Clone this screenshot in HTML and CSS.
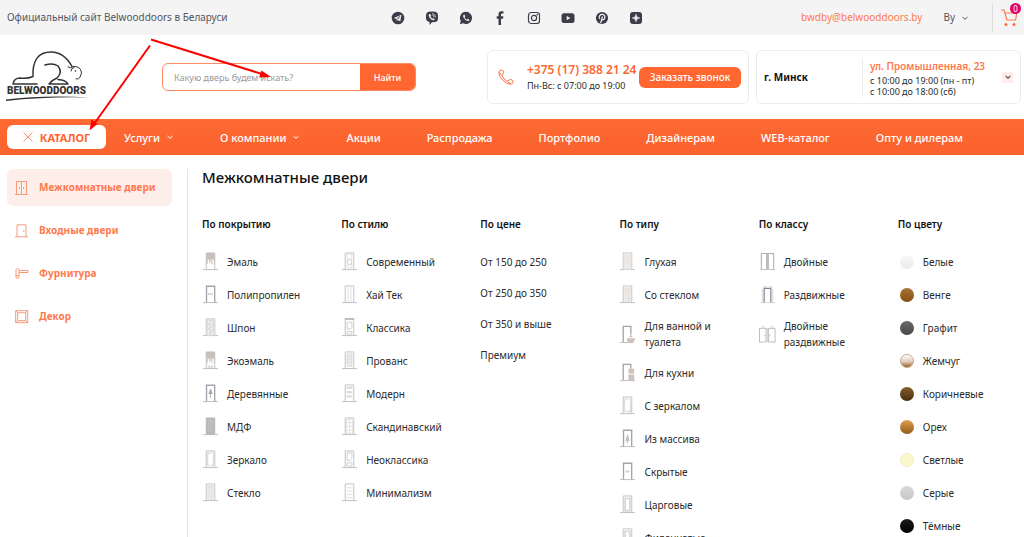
FILE: index.html
```html
<!DOCTYPE html>
<html lang="ru">
<head>
<meta charset="utf-8">
<title>Belwooddoors</title>
<link rel="stylesheet" href="styles.css">
</head>
<body>
<svg class="sprite" aria-hidden="true">
  <symbol id="chev" viewBox="0 0 8 8"><path d="M1.500 3 4 5.300 6.500 3" fill="none" stroke="currentColor"/></symbol>
  <symbol id="frame" viewBox="0 0 16 20"><path d="M0 18.500h16" stroke="#bdbdc2"/><path d="M3.500 18.500V1h9v17.500" fill="none" stroke="#c0c0c6"/></symbol>
  <symbol id="frame-dark" viewBox="0 0 16 20"><path d="M0 18.500h16" stroke="#bdbdc2"/><path d="M3.800 18.500V1.300h8.600v17.200" fill="none" stroke="#a3a3af" stroke-width="1.400"/></symbol>
  <symbol id="d-enamel" viewBox="0 0 16 20"><use href="#frame"/><path d="M3.500 1h9v12h-1V8h-1.500v5H9V8H8v3H6.500V8H5v5H3.500z" fill="#c9bfb9"/></symbol>
  <symbol id="d-poly" viewBox="0 0 16 20"><use href="#frame-dark"/><path d="M5 9.500h6" stroke="#d5ccc7" stroke-width="2" stroke-dasharray="1.500 .5"/></symbol>
  <symbol id="d-veneer" viewBox="0 0 16 20"><use href="#frame"/><path d="M4 1.500h8v17H4z" fill="#e1dfdd"/><path d="M6 3v3m3-2v4M6 8v3m3-1v3m-3 0v4m4-2v2" stroke="#fff" stroke-dasharray="2 1"/></symbol>
  <symbol id="d-eco" viewBox="0 0 16 20"><use href="#d-enamel"/><path d="M5 16.500h6" stroke="#d8d4d0" stroke-width="2"/></symbol>
  <symbol id="d-wood" viewBox="0 0 16 20"><use href="#frame-dark"/><path d="m8 5 1.500 2.500H9l1.300 3H8.400V15h-.8v-4.500H5.700l1.300-3h-.5z" fill="#a9a29d"/></symbol>
  <symbol id="d-massive" viewBox="0 0 16 20"><use href="#frame-dark"/><path d="m8 5 1.200 3.500L10.300 13H8.400v2.500h-.8V13H5.700l1.100-4.500z" fill="#c9bfb8"/></symbol>
  <symbol id="d-mdf" viewBox="0 0 16 20"><use href="#frame"/><path d="M3.500 1h9v17.500h-9z" fill="#b9b6b7"/><path d="M6 3v14M8 3v14M10 3v14" stroke="#d4d1d1" stroke-dasharray="1 1"/></symbol>
  <symbol id="d-mirror" viewBox="0 0 16 20"><use href="#frame"/><path d="M5 3h6v13.500H5z" fill="#fff" stroke="#dcd8d4"/><path d="m5.500 5 1.500-2m2 13.500 2-2" stroke="#d9d4d0"/></symbol>
  <symbol id="d-glass" viewBox="0 0 16 20"><use href="#frame"/><path d="M4.500 2h7v16h-7z" fill="#ebe7e4"/><path d="M6 4h1m2 1h1m-1 9h1" stroke="#cfc8c3"/></symbol>
  <symbol id="d-modern" viewBox="0 0 16 20"><use href="#frame"/><path d="M5.500 2.500h5v5h-5zm0 11h5v3h-5z" fill="none" stroke="#e2dfdc"/><circle cx="8" cy="10.500" r="2.500" fill="#fff" stroke="#d2cecb"/></symbol>
  <symbol id="d-hitech" viewBox="0 0 16 20"><use href="#frame"/><path d="M6.500 2v16m3-16v16" stroke="#e3dcd6"/></symbol>
  <symbol id="d-classic" viewBox="0 0 16 20"><use href="#frame"/><path d="M3 1h10" stroke="#bcbcbc" stroke-width="2"/><path d="M5.500 4.500h5v6l-2 1h-3zM5.500 14h5v3h-5z" fill="#fff" stroke="#cfcdcb"/></symbol>
  <symbol id="d-neo" viewBox="0 0 16 20"><use href="#frame"/><path d="M5.500 3h5v6l-2 2h-3zM5.500 13.500h5v3.500h-5z" fill="#fff" stroke="#cfcdcb"/></symbol>
  <symbol id="d-lines" viewBox="0 0 16 20"><use href="#frame"/><path d="M5.500 3h5v13h-5z" fill="#f0ebe8" stroke="#dfdad7"/><path d="M5 6h6M5 9h6M5 12h6" stroke="#e3dcd7"/></symbol>
  <symbol id="d-blocks" viewBox="0 0 16 20"><use href="#frame"/><path d="M5 4h6m-6 4.500h6M5 13h6" stroke="#e2dcd8" stroke-width="2.500"/></symbol>
  <symbol id="d-grid" viewBox="0 0 16 20"><use href="#frame"/><path d="M5 2.500h6v15H5zM8 2v16M5 6h6m-6 4h6m-6 4h6" fill="none" stroke="#e6e2de"/></symbol>
  <symbol id="d-min" viewBox="0 0 16 20"><use href="#frame"/><path d="M5 5h6M5 8.500h6M5 12h6m-6 3.500h6" stroke="#dddde1"/></symbol>
  <symbol id="d-solid" viewBox="0 0 16 20"><use href="#frame"/><path d="M4 1.500h8v17H4z" fill="#ece8e5"/></symbol>
  <symbol id="d-bath" viewBox="0 0 16 20"><path d="M0 18.500h14" stroke="#bdbdc2"/><path d="M3.500 18V1.500h8V10" fill="none" stroke="#a3a3af" stroke-width="1.400"/><path d="M7 14h9l-1 4H8zM10 13v-2h3v2z" fill="#cdc2bb"/></symbol>
  <symbol id="d-kitchen" viewBox="0 0 16 20"><path d="M0 18.500h16" stroke="#bdbdc2"/><path d="M3.500 18V1.500h8V6" fill="none" stroke="#a3a3af" stroke-width="1.400"/><path d="M9 6h6v5H9zm0 6h6v6H9z" fill="#cdc2bb"/></symbol>
  <symbol id="d-hidden" viewBox="0 0 16 20"><use href="#frame-dark"/><path d="M6 10h4" stroke="#d3cecb" stroke-width="2"/></symbol>
  <symbol id="d-panel" viewBox="0 0 16 20"><use href="#frame"/><path d="M5.500 3.500h5v13h-5z" fill="#fff" stroke="#dcd9d6" stroke-width="2"/></symbol>
  <symbol id="d-double" viewBox="0 0 16 20"><path d="M0 18.500h16" stroke="#bdbdc2"/><path d="M1.500 18V1.500h5.700V18M8.800 18V1.500h5.700V18" fill="none" stroke="#a4a4ab"/><path d="M8 1v17" stroke="#b9b9be"/></symbol>
  <symbol id="d-slide" viewBox="0 0 16 20"><path d="M1 18.500h15M2.500 18V4m11 14V4" stroke="#ddd6d1"/><path d="M4.500 18.500V3.500h7v15" fill="none" stroke="#85859a" stroke-width="1.300"/><path d="M4 2h3m3 0h3" stroke="#c4bfbc"/></symbol>
  <symbol id="d-slide2" viewBox="0 0 18 20"><path d="M.5 18V3.500h7V18zM10 18V3.500h7V18z" fill="none" stroke="#b9b9bd"/><path d="M8.800 3v15" stroke="#c9c9cc"/><path d="M3 2h3m6 0h3M6 10v2m5.500-2v2" stroke="#c9c4c0"/></symbol>
</svg>

<div class="topbar">
  <span class="slogan">Официальный сайт Belwooddoors в Беларуси</span>
  <nav class="social" aria-label="Социальные сети">
    <a href="#" aria-label="Telegram"><svg viewBox="0 0 14 14"><circle cx="7" cy="7" r="6.300"/><path d="m2.800 7 7.700-3.200-1.300 6.700-2.300-1.600-1.200 1.200-.3-2z" fill="#f4f4f4"/><path d="m5.500 8 3.500-2.700-2.600 3.200" fill="none" stroke="#3d3d4a" stroke-width=".6"/></svg></a>
    <a href="#" aria-label="Viber"><svg viewBox="0 0 14 14"><path d="M3.500.8Q7 0 10.500.8 13 1.500 13 4v3.500q0 3-3 3.600l-3 .2L4.500 14v-3Q1 10.500 1 7V4Q1 1.500 3.500.8z"/><path d="M4 3q-1 1 .5 3.500T8.500 9.300q1 0 1.300-1L8.300 7.200l-.8.600Q6 7 5.600 5.500l.7-.7L5 3z" fill="#f4f4f4"/><path d="M7 2.500q3.500.3 3.700 4M7.300 4.200q1.700.2 1.800 2" fill="none" stroke="#f4f4f4" stroke-width=".7"/></svg></a>
    <a href="#" aria-label="WhatsApp"><svg viewBox="0 0 14 14"><path d="M7 .8a6.100 6.100 0 1 1-2.900 11.500L.8 13.300l1-3.200A6.100 6.100 0 0 1 7 .8z"/><path d="M4.700 3.800q-1 .8-.3 2.500 1.500 3 4.300 3.800 1.700 0 1.800-1.400L8.800 7.800l-.9.900Q6.300 8 5.500 6.300l.8-.9-.7-1.600z" fill="#f4f4f4"/></svg></a>
    <a href="#" aria-label="Facebook"><svg viewBox="0 0 14 14"><path d="M5.500 14V7.700H3.700V5.300h1.800V3.500Q5.500.3 8.500.3h2v2.300H9.200q-1.200 0-1.200 1.200v1.500h2.400l-.3 2.400H8V14z"/></svg></a>
    <a href="#" aria-label="Instagram"><svg viewBox="0 0 14 14"><g fill="none" stroke="#3d3d4a" stroke-width="1.200"><rect x="1.500" y="1.500" width="11" height="11" rx="2.800"/><circle cx="7" cy="7" r="2.600"/></g><circle cx="10.200" cy="3.800" r=".8"/></svg></a>
    <a href="#" aria-label="YouTube"><svg viewBox="0 0 14 14"><rect x=".5" y="2.300" width="13" height="9.600" rx="2.500"/><path d="m5.700 5 3.600 2.100-3.600 2.100z" fill="#f4f4f4"/></svg></a>
    <a href="#" aria-label="Pinterest"><svg viewBox="0 0 14 14"><circle cx="7" cy="7" r="6.100"/><path d="M4.700 8Q3.600 6.300 4.700 4.600 6 3 8 3.500q2.300.8 1.800 3Q9.200 9 7.400 8.800L6.800 8.400M7.400 5.500 5.700 12" fill="none" stroke="#f4f4f4" stroke-width="1.200"/></svg></a>
    <a href="#" aria-label="Дзен"><svg viewBox="0 0 14 14"><rect x="1" y="1" width="12" height="12" rx="3"/><path d="M7 3q.2 3.800 4 4-3.800.2-4 4-.2-3.800-4-4 3.800-.2 4-4z" fill="#f4f4f4" stroke="#f4f4f4" stroke-width=".5"/></svg></a>
  </nav>
  <a class="mail" href="#">bwdby@belwooddoors.by</a>
  <button class="lang" type="button">By <svg class="chev"><use href="#chev"/></svg></button>
  <a class="cart" href="#" aria-label="Корзина">
    <svg viewBox="0 0 16 18"><path d="M0 1h3l3 10h8.500l1.500-7H4" fill="none" stroke="#ff7a4d" stroke-width="1.200"/><circle cx="5" cy="15.500" r="1.500"/><circle cx="13" cy="15.500" r="1.500"/></svg>
    <span class="badge">0</span>
  </a>
</div>

<header class="header">
  <a class="logo" href="#" aria-label="Belwooddoors">
    <svg viewBox="0 0 86 52">
      <g fill="none" stroke="#333" stroke-width="1.500" stroke-linecap="round" stroke-linejoin="round">
        <path d="M31 33H7Q8 27 14 27Q21 28 27 25.500Q26 1 45 1Q58 1 66 15.500"/>
        <path d="M39 14Q47 11.500 52 15Q57 21 51 27Q46 29 43 33H62Q60 29 52 28.500"/>
        <path d="M62 16q3 2 5-.5Q75 15 75.500 22l-1.500 4M65 20q0-3 3-3.500M70 28q3 .5 4-1.500" stroke-width="1"/>
      </g>
      <circle cx="69.500" cy="20" r=".7"/>
      <text x="1" y="43">BELWOODDOORS</text>
      <path d="M0 48.500Q38 44 84 46.500Q40 45.500 0 50z" fill="#333"/>
    </svg>
  </a>
  <form class="search">
    <input type="text" aria-label="Поиск" placeholder="Какую дверь будем искать?">
    <button type="button">Найти</button>
  </form>
  <section class="card phone">
    <svg class="handset" viewBox="0 0 16 16"><path d="M3.500 1Q1 1 .8 3.500 1 8 5 11.500 8.500 15 12.500 15.200 15 15.200 15.200 12.500q-.2-2-2.700-2-2 0-2.500 2Q5.500 11 3.700 6 5.500 5.500 5.500 3.200 5.500 1 3.500 1zM3.700 6Q1.500 5 1.300 3M10 12.500q.8 2 3 2.300" fill="none" stroke="currentColor"/></svg>
    <div class="numbers"><a href="#">+375 (17) 388 21 24</a><span>Пн-Вс: с 07:00 до 19:00</span></div>
    <button class="call" type="button">Заказать звонок</button>
  </section>
  <section class="card place">
    <strong>г. Минск</strong>
    <div class="address"><a href="#">ул. Промышленная, 23</a><span>с 10:00 до 19:00 (пн - пт)</span><span>с 10:00 до 18:00 (сб)</span></div>
    <button class="more" type="button" aria-label="Ещё адреса"><svg class="chev"><use href="#chev"/></svg></button>
  </section>
</header>

<nav class="mainnav">
  <button class="catalog" type="button"><svg viewBox="0 0 10 10"><path d="m.5.5 9 9m0-9-9 9" stroke="#ff8f6a" fill="none"/></svg>КАТАЛОГ</button>
  <div class="links">
    <a href="#">Услуги <svg class="chev"><use href="#chev"/></svg></a>
    <a href="#">О компании <svg class="chev"><use href="#chev"/></svg></a>
    <a href="#">Акции</a>
    <a href="#">Распродажа</a>
    <a href="#">Портфолио</a>
    <a href="#">Дизайнерам</a>
    <a href="#">WEB-каталог</a>
    <a href="#">Опту и дилерам</a>
  </div>
</nav>

<main class="menu">
  <aside class="side">
    <a class="active" href="#"><svg viewBox="0 0 14 14"><path d="M1.500 13.500V.5h10v13M0 13.500h13M6.500.5v13M4.500 6v2m4-2v2"/></svg>Межкомнатные двери</a>
    <a href="#"><svg viewBox="0 0 14 14"><path d="M2 12.500V.8h9v11.700M0 12.800h13M8.800 6v2"/></svg>Входные двери</a>
    <a href="#"><svg viewBox="0 0 14 14"><path d="M1 2.500q1.500-2 3 0V11H1zM4 3.500h9v2H4M1 8.500h3"/></svg>Фурнитура</a>
    <a href="#"><svg viewBox="0 0 14 14"><path d="M.7.700h12v12H.7zM2.700 2.700h8v8h-8zM.7.700l2 2m10-2-2 2m2 10-2-2m-10 2 2-2"/></svg>Декор</a>
  </aside>
  <section class="content">
    <h1>Межкомнатные двери</h1>
    <div class="columns">
      <section><h2>По покрытию</h2><ul>
        <li><a href="#"><svg><use href="#d-enamel"/></svg>Эмаль</a></li>
        <li><a href="#"><svg><use href="#d-poly"/></svg>Полипропилен</a></li>
        <li><a href="#"><svg><use href="#d-veneer"/></svg>Шпон</a></li>
        <li><a href="#"><svg><use href="#d-eco"/></svg>Экоэмаль</a></li>
        <li><a href="#"><svg><use href="#d-wood"/></svg>Деревянные</a></li>
        <li><a href="#"><svg><use href="#d-mdf"/></svg>МДФ</a></li>
        <li><a href="#"><svg><use href="#d-mirror"/></svg>Зеркало</a></li>
        <li><a href="#"><svg><use href="#d-glass"/></svg>Стекло</a></li>
      </ul></section>
      <section><h2>По стилю</h2><ul>
        <li><a href="#"><svg><use href="#d-modern"/></svg>Современный</a></li>
        <li><a href="#"><svg><use href="#d-hitech"/></svg>Хай Тек</a></li>
        <li><a href="#"><svg><use href="#d-classic"/></svg>Классика</a></li>
        <li><a href="#"><svg><use href="#d-lines"/></svg>Прованс</a></li>
        <li><a href="#"><svg><use href="#d-blocks"/></svg>Модерн</a></li>
        <li><a href="#"><svg><use href="#d-grid"/></svg>Скандинавский</a></li>
        <li><a href="#"><svg><use href="#d-neo"/></svg>Неоклассика</a></li>
        <li><a href="#"><svg><use href="#d-min"/></svg>Минимализм</a></li>
      </ul></section>
      <section><h2>По цене</h2><ul class="plain">
        <li><a href="#">От 150 до 250</a></li>
        <li><a href="#">От 250 до 350</a></li>
        <li><a href="#">От 350 и выше</a></li>
        <li><a href="#">Премиум</a></li>
      </ul></section>
      <section><h2>По типу</h2><ul>
        <li><a href="#"><svg><use href="#d-solid"/></svg>Глухая</a></li>
        <li><a href="#"><svg><use href="#d-glass"/></svg>Со стеклом</a></li>
        <li><a href="#"><svg><use href="#d-bath"/></svg>Для ванной и туалета</a></li>
        <li><a href="#"><svg><use href="#d-kitchen"/></svg>Для кухни</a></li>
        <li><a href="#"><svg><use href="#d-mirror"/></svg>С зеркалом</a></li>
        <li><a href="#"><svg><use href="#d-massive"/></svg>Из массива</a></li>
        <li><a href="#"><svg><use href="#d-hidden"/></svg>Скрытые</a></li>
        <li><a href="#"><svg><use href="#d-panel"/></svg>Царговые</a></li>
        <li><a href="#"><svg><use href="#d-panel"/></svg>Филенчатые</a></li>
      </ul></section>
      <section><h2>По классу</h2><ul>
        <li><a href="#"><svg><use href="#d-double"/></svg>Двойные</a></li>
        <li><a href="#"><svg><use href="#d-slide"/></svg>Раздвижные</a></li>
        <li><a href="#"><svg><use href="#d-slide2"/></svg>Двойные раздвижные</a></li>
      </ul></section>
      <section><h2>По цвету</h2><ul>
        <li><a href="#"><i class="dot white"></i>Белые</a></li>
        <li><a href="#"><i class="dot wenge"></i>Венге</a></li>
        <li><a href="#"><i class="dot graphite"></i>Графит</a></li>
        <li><a href="#"><i class="dot pearl"></i>Жемчуг</a></li>
        <li><a href="#"><i class="dot brown"></i>Коричневые</a></li>
        <li><a href="#"><i class="dot nut"></i>Орех</a></li>
        <li><a href="#"><i class="dot light"></i>Светлые</a></li>
        <li><a href="#"><i class="dot grey"></i>Серые</a></li>
        <li><a href="#"><i class="dot dark"></i>Тёмные</a></li>
      </ul></section>
    </div>
  </section>
</main>

<svg class="arrows" width="290" height="140" viewBox="0 0 290 140" aria-hidden="true">
  <path d="M151 39.500 262 74M150 45.500 94 124" stroke="#f00" stroke-width="2"/>
  <path d="m271 77-12 .5 2.500-7zM89.500 130.500l2-11 6 4.500z" fill="#f00"/>
</svg>
</body>
</html>
```
FILE: styles.css
```css
* { box-sizing: border-box; }
html { overflow: hidden; }
body {
  margin: 0;
  background: #fff;
  color: #2b2b2b;
  font: 10px/17px "Noto Sans", "Open Sans", sans-serif;
}
a { color: inherit; text-decoration: none; }
button, input { font: inherit; border: 0; padding: 0; margin: 0; background: none; }
h1, h2, ul { margin: 0; padding: 0; }
ul { list-style: none; }
.sprite { position: absolute; width: 0; height: 0; }
.chev { width: 8px; height: 8px; }

.topbar {
  display: flex;
  align-items: center;
  height: 35px;
  padding: 0 7px;
  background: #f4f4f4;
  color: #55555f;
}
.slogan { width: 384px; }
.social { display: flex; gap: 20px; }
.social a { display: flex; }
.social svg { width: 14px; height: 14px; fill: #3d3d4a; }
.mail { margin-left: auto; color: #ff7a4d; }
.lang {
  display: flex;
  align-items: center;
  gap: 6px;
  margin: 0 23px 0 21px;
  color: #55555f;
}
.cart {
  position: relative;
  display: flex;
  padding: 6px 0 5px 8px;
  border-left: 1px solid #dcdcdc;
}
.cart svg { width: 16px; height: 18px; fill: #ff6a35; }
.badge {
  position: absolute;
  top: 0;
  right: -4px;
  width: 11px;
  height: 11px;
  border-radius: 50%;
  background: #e0006b;
  color: #fff;
  font-size: 8px;
  line-height: 11px;
  text-align: center;
}

.header {
  display: flex;
  align-items: center;
  height: 84px;
  padding: 0 3px 0 6px;
}
.logo { display: flex; width: 156px; }
.logo svg { width: 86px; height: 52px; }
.logo text { font: 900 10px Roboto, sans-serif; fill: #333; }
.search {
  display: flex;
  width: 254px;
  height: 28px;
  margin-right: auto;
  border: 1px solid #ff8a63;
  border-radius: 6px;
  overflow: hidden;
}
.search input { flex: 1; min-width: 0; padding: 0 11px; font-size: 9px; }
.search input::placeholder { color: #999; opacity: 1; }
.search button { width: 55px; background: #ff6630; color: #fff; font-size: 9px; font-weight: 500; }
.card {
  display: flex;
  align-items: center;
  height: 54px;
  border: 1px solid #ececec;
  border-radius: 6px;
}
.phone { width: 262px; margin-right: 7px; padding: 0 7px 0 10px; }
.handset { width: 16px; height: 16px; margin-right: 13px; color: #ff7a4d; }
.numbers { display: flex; flex-direction: column; flex: 1; white-space: nowrap; font-size: 9px; line-height: 15px; }
.numbers a { color: #ff6630; font-size: 12px; font-weight: 600; line-height: 17px; }
.call { width: 102px; height: 21px; border-radius: 6px; background: #ff6630; color: #fff; font-weight: 500; }
.place { width: 265px; padding: 0 7px; }
.place strong { width: 98px; color: #111; }
.address {
  display: flex;
  flex: 1;
  flex-direction: column;
  padding-left: 7px;
  border-left: 1px solid #ececec;
  font-size: 9px;
  line-height: 11px;
  white-space: nowrap;
}
.address a { color: #ff7a4d; font-size: 10px; font-weight: 600; line-height: 17px; }
.more { display: flex; align-items: center; justify-content: center; width: 11px; height: 11px; background: #fdeeea; }

.mainnav {
  display: flex;
  align-items: center;
  height: 36px;
  padding: 0 7px;
  background: linear-gradient(#ff6933, #f9622c);
}
.catalog {
  display: flex;
  align-items: center;
  justify-content: center;
  gap: 7px;
  width: 99px;
  height: 24px;
  margin-right: 18px;
  border-radius: 6px;
  background: #fff;
  color: #ff6630;
  font-size: 11px;
  font-weight: 700;
}
.catalog svg { width: 10px; height: 10px; }
.links { display: flex; gap: 46px; color: #fff; font-size: 11px; font-weight: 500; white-space: nowrap; }
.links a { display: flex; align-items: center; gap: 6px; }

.menu { display: flex; gap: 15px; padding: 14px 7px 0 7px; }
.side { display: flex; flex-direction: column; flex: 0 0 165px; gap: 6px; color: #ff7a4d; font-weight: 700; }
.side a { display: flex; align-items: center; gap: 10px; height: 37px; padding-left: 8px; border-radius: 6px; }
.side .active { background: #feeeea; }
.side svg { width: 14px; height: 14px; fill: none; stroke: #f79b7c; }
.content { flex: 1; padding-left: 14px; border-left: 1px solid #e6e6e6; }
.content h1 { color: #111; font-size: 15px; font-weight: 500; line-height: 17px; }
.columns { display: grid; grid-template-columns: repeat(6, 1fr); gap: 20px; margin-top: 30px; }
.columns h2 { margin-bottom: 19px; color: #111; font-size: 10px; font-weight: 600; line-height: 17px; }
.columns ul { display: flex; flex-direction: column; gap: 13px; }
.columns a { display: flex; align-items: center; gap: 8px; min-height: 19px; line-height: 16px; }
.columns svg { flex: none; width: 17px; height: 19px; }
.columns .plain { gap: 12px; }
.dot { flex: none; width: 14px; height: 14px; margin: 0 1px 0 2px; border-radius: 50%; }
.white { background: linear-gradient(#f9f9f9, #eaeaea); }
.wenge { background: linear-gradient(#a87338, #85500f); }
.graphite { background: linear-gradient(#6b6b6b, #474747); }
.pearl { background: linear-gradient(#fff, #e0cdbf 55%, #9a5f28); border: 1px solid #c8a588; }
.brown { background: linear-gradient(#85602f, #4a2c0c); }
.nut { background: linear-gradient(#e0a052, #94581a); }
.light { background: #fdf7cd; border: 1px solid #f3ecc6; }
.grey { background: linear-gradient(#d8d8d8, #c8c8c8); }
.dark { background: linear-gradient(#1c1c1c, #000); }
.columns li { min-height: 20px; }
.columns .plain li { min-height: 19px; }

.arrows { position: absolute; top: 0; left: 0; pointer-events: none; }
```
